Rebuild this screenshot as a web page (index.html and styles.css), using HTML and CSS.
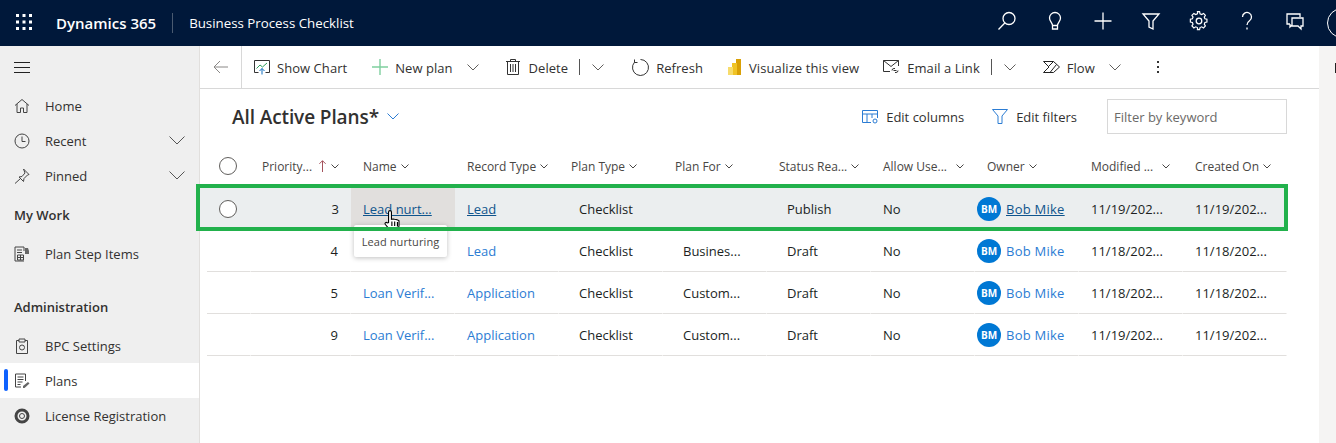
FILE: index.html
```html
<!DOCTYPE html>
<html lang="en">
<head>
    <meta charset="UTF-8">
    <title>Business Process Checklist</title>
    <link rel="stylesheet" href="styles.css">
</head>
<body>
    <header class="topbar">
        <svg class="waffle" width="16" height="16" viewBox="0 0 16 16" fill="#fff">
            <rect x="0" y="0" width="3" height="3"/><rect x="6.500" y="0" width="3" height="3"/><rect x="13" y="0" width="3" height="3"/>
            <rect x="0" y="6.500" width="3" height="3"/><rect x="6.500" y="6.500" width="3" height="3"/><rect x="13" y="6.500" width="3" height="3"/>
            <rect x="0" y="13" width="3" height="3"/><rect x="6.500" y="13" width="3" height="3"/><rect x="13" y="13" width="3" height="3"/>
        </svg>
        <span class="brand">Dynamics 365</span>
        <span class="app-name">Business Process Checklist</span>
        <div class="top-icons">
            <svg width="20" height="20" viewBox="0 0 20 20"><circle cx="12" cy="7.500" r="6"/><path d="M7.800 12 1.500 18.500"/></svg>
            <svg width="20" height="20" viewBox="0 0 20 20"><path d="M7.500 14.500C7.500 11.500 4.500 10.500 4.500 7a5.500 5.500 0 0 1 11 0c0 3.500-3 4.500-3 7.500zM7.500 14.500v3.500h5v-3.500"/></svg>
            <svg width="20" height="20" viewBox="0 0 20 20"><path d="M10 1.500v17M1.500 10h17"/></svg>
            <svg width="20" height="20" viewBox="0 0 20 20"><path d="M2 3h16l-6 7v8l-4-2v-6z"/></svg>
            <svg width="20" height="20" viewBox="0 0 20 20"><circle cx="10" cy="10" r="2.800"/><path d="M8.500 2h3l.5 2.300 1.800.8 2-1.200 2 2.100-1.200 2 .7 1.800 2.200.5v3l-2.200.5-.7 1.800 1.200 2-2 2.100-2-1.200-1.800.8-.5 2.200h-3" transform="translate(0 -1.200) scale(.92)"/><path d="M8.500 2 8 4.300l-1.800.8-2-1.200-2.100 2.100 1.200 2-.7 1.800L.4 10.300v3l2.200.5.700 1.800-1.200 2 2.100 2.100 2-1.200 1.800.8.500 2.200" transform="translate(1 -1.200) scale(.92)"/></svg>
            <svg width="20" height="20" viewBox="0 0 20 20"><path d="M5.500 6a4.500 4.500 0 1 1 7 3.700c-1.500 1-2.500 2-2.500 4.300M10 16.500v2"/></svg>
            <svg width="20" height="20" viewBox="0 0 20 20"><path d="M5 13H2V3h13v3M7 7h11v8h-2v3l-3-3H7zM5 13v3l2-2"/></svg>
        </div>
        <div class="profile"><span>B</span></div>
    </header>

    <div class="main">
        <nav class="sidebar">
            <svg class="hamburger" width="16" height="11" viewBox="0 0 16 11" stroke="#222" stroke-width="1"><path d="M0 .5h16M0 5.500h16M0 10.500h16"/></svg>
            <a class="nav-item">
                <svg class="nav-icon" viewBox="0 0 16 16"><path d="M1 7.500 8 1.500l7 6M3 6v8.500h3.500V10h3v4.500H13V6"/></svg>
                <span>Home</span>
            </a>
            <a class="nav-item">
                <svg class="nav-icon" viewBox="0 0 16 16"><circle cx="8" cy="8" r="7"/><path d="M8 3.500V8.500h3.500"/></svg>
                <span>Recent</span>
                <svg class="nav-chevron" viewBox="0 0 16 9"><path d="M.5.500 8 8 15.500.500"/></svg>
            </a>
            <a class="nav-item">
                <svg class="nav-icon" viewBox="0 0 16 16"><path d="M9.500 1 15 6.500l-1.500.5-3.500 3.500-.5 3L5 9l3-.5L11 5zM6.500 10.500 1 15.500"/></svg>
                <span>Pinned</span>
                <svg class="nav-chevron" viewBox="0 0 16 9"><path d="M.5.500 8 8 15.500.500"/></svg>
            </a>
            <div class="nav-title">My Work</div>
            <a class="nav-item">
                <svg class="nav-icon" viewBox="0 0 16 16"><path d="M10 15H1V1h9v4M3 4h5M3 6.500h5M3.500 9h6v5h-6zM3.500 11.500h6M6.500 9v5"/><path class="solid" d="M11 2h3l1 3v3h-4z"/></svg>
                <span>Plan Step Items</span>
            </a>
            <div class="nav-title admin">Administration</div>
            <a class="nav-item">
                <svg class="nav-icon" viewBox="0 0 16 16"><path d="M5 2.500H2.500v13h11v-13H11M5 1h6v3H5z"/><circle cx="8" cy="9.500" r="2.500"/></svg>
                <span>BPC Settings</span>
            </a>
            <a class="nav-item selected">
                <svg class="nav-icon" viewBox="0 0 16 16"><path d="M11.500 8V1h-10v13H7M3.500 4h6M3.500 6.500h6M3.500 9h5M3.500 11.500h3"/><path class="solid" d="M9 13l5-4 1.500 1.500-5 4.500H9z"/></svg>
                <span>Plans</span>
            </a>
            <a class="nav-item">
                <svg class="nav-icon" viewBox="0 0 16 16"><circle class="thick" cx="8" cy="8" r="6"/><circle cx="8" cy="8" r="2.500"/></svg>
                <span>License Registration</span>
            </a>
        </nav>

        <div class="content">
            <div class="commandbar">
                <div class="back">
                    <svg width="16" height="14" viewBox="0 0 16 14" fill="none" stroke="#8a8886"><path d="M15 7H1M7 1 1 7l6 6"/></svg>
                </div>
                <div class="cmd show-chart">
                    <svg width="16" height="16" viewBox="0 0 16 16" fill="none" stroke="#333"><path d="M4.500 13.500H.5v-12h15v12h-4"/><path stroke="#2e9e5b" d="M2.500 9.500 6 6l2.500 2L13 4"/><path stroke="#0f6cbd" d="M8 15.500V9.500M5.500 12 8 9.500l2.500 2.500"/></svg>
                    <span>Show Chart</span>
                </div>
                <div class="cmd new-plan">
                    <svg width="16" height="16" viewBox="0 0 16 16" fill="none" stroke="#7fcf9f" stroke-width="1.400"><path d="M8 0v16M0 8h16"/></svg>
                    <span>New plan</span>
                    <svg class="chev" viewBox="0 0 12 7"><path d="M.5.500 6 6 11.500.500"/></svg>
                </div>
                <div class="cmd delete">
                    <svg width="14" height="16" viewBox="0 0 14 16" fill="none" stroke="#333"><path d="M0 2.500h14M4.500 2.500V.5h5v2M1.500 2.500v13h11v-13M4.500 5v8M7 5v8M9.500 5v8"/></svg>
                    <span>Delete</span>
                    <i class="cmd-sep"></i>
                    <svg class="chev" viewBox="0 0 12 7"><path d="M.5.500 6 6 11.500.500"/></svg>
                </div>
                <div class="cmd refresh">
                    <svg width="17" height="17" viewBox="0 0 17 17" fill="none" stroke="#333"><path d="M8.500.5a8 8 0 1 1-6 2.700M2.500.5v3h3"/></svg>
                    <span>Refresh</span>
                </div>
                <div class="cmd visualize">
                    <svg width="13" height="16" viewBox="0 0 13 16"><rect x="8" y="0" width="5" height="16" fill="#d9a006"/><rect x="4" y="4" width="5" height="12" fill="#f0c325"/><rect x="0" y="8" width="5" height="8" fill="#f7dc6c"/></svg>
                    <span>Visualize this view</span>
                </div>
                <div class="cmd email">
                    <svg width="17" height="14" viewBox="0 0 17 14" fill="none" stroke="#333"><path d="M7 11.500H.5V.5h15V6M.5.500 8 6.500 15.500.500"/><path d="M9 10.500a2 2 0 0 1 2-2h1M15 10.500a2 2 0 0 1-2 2h-1M10.500 10.500h3"/></svg>
                    <span>Email a Link</span>
                    <i class="cmd-sep"></i>
                    <svg class="chev" viewBox="0 0 12 7"><path d="M.5.500 6 6 11.500.500"/></svg>
                </div>
                <div class="cmd flow">
                    <svg width="17" height="12" viewBox="0 0 17 12" fill="none" stroke="#222"><path d="M.5.500h10l6 5.500-6 5.500H.5L6 6zM10.500.5 5 6M13.500 3.500 7 11.500"/></svg>
                    <span>Flow</span>
                    <svg class="chev" viewBox="0 0 12 7"><path d="M.5.500 6 6 11.500.500"/></svg>
                </div>
                <div class="more"><i></i><i></i><i></i></div>
            </div>

            <div class="viewbar">
                <h1>All Active Plans*</h1>
                <svg class="view-chev" viewBox="0 0 12 7"><path d="M.5.500 6 6 11.500.500"/></svg>
                <div class="view-action edit-columns">
                    <svg width="16" height="14" viewBox="0 0 16 14" fill="none" stroke="#2b7cd3"><path d="M9 12.500H.5V.5h15V8M.5 4h15M5 4v8.500M10 4v4"/><circle cx="13" cy="11" r="2"/></svg>
                    <span>Edit columns</span>
                </div>
                <div class="view-action edit-filters">
                    <svg width="16" height="15" viewBox="0 0 16 15" fill="none" stroke="#2b7cd3"><path d="M.5.500h15L10 7v7.500H6V7z"/></svg>
                    <span>Edit filters</span>
                </div>
                <div class="keyword">Filter by keyword</div>
            </div>

            <div class="grid">
                <div class="row head">
                    <div class="cell check"><i class="circle"></i></div>
                    <div class="cell priority">Priority...<svg class="sort" width="7" height="12" viewBox="0 0 7 12"><path d="M3.500 12V.8M.4 3.800 3.500.7l3.100 3.100"/></svg><svg class="chev-sm" viewBox="0 0 8 5"><path d="M.5.500 4 4 7.500.500"/></svg></div>
                    <div class="cell">Name<svg class="chev-sm" viewBox="0 0 8 5"><path d="M.5.500 4 4 7.500.500"/></svg></div>
                    <div class="cell">Record Type<svg class="chev-sm" viewBox="0 0 8 5"><path d="M.5.500 4 4 7.500.500"/></svg></div>
                    <div class="cell">Plan Type<svg class="chev-sm" viewBox="0 0 8 5"><path d="M.5.500 4 4 7.500.500"/></svg></div>
                    <div class="cell">Plan For<svg class="chev-sm" viewBox="0 0 8 5"><path d="M.5.500 4 4 7.500.500"/></svg></div>
                    <div class="cell">Status Rea...<svg class="chev-sm" viewBox="0 0 8 5"><path d="M.5.500 4 4 7.500.500"/></svg></div>
                    <div class="cell wide">Allow Use...<svg class="chev-sm" viewBox="0 0 8 5"><path d="M.5.500 4 4 7.500.500"/></svg></div>
                    <div class="cell">Owner<svg class="chev-sm" viewBox="0 0 8 5"><path d="M.5.500 4 4 7.500.500"/></svg></div>
                    <div class="cell wide">Modified ...<svg class="chev-sm" viewBox="0 0 8 5"><path d="M.5.500 4 4 7.500.500"/></svg></div>
                    <div class="cell">Created On<svg class="chev-sm" viewBox="0 0 8 5"><path d="M.5.500 4 4 7.500.500"/></svg></div>
                </div>

                <div class="row data hover">
                    <div class="cell check"><i class="circle"></i></div>
                    <div class="cell num">3</div>
                    <div class="cell active"><a>Lead nurt...</a></div>
                    <div class="cell"><a>Lead</a></div>
                    <div class="cell">Checklist</div>
                    <div class="cell"></div>
                    <div class="cell">Publish</div>
                    <div class="cell">No</div>
                    <div class="cell owner"><b class="avatar">BM</b><a>Bob Mike</a></div>
                    <div class="cell">11/19/202...</div>
                    <div class="cell">11/19/202...</div>
                </div>
                <div class="row data">
                    <div class="cell check"></div>
                    <div class="cell num">4</div>
                    <div class="cell"></div>
                    <div class="cell"><a>Lead</a></div>
                    <div class="cell">Checklist</div>
                    <div class="cell">Busines...</div>
                    <div class="cell">Draft</div>
                    <div class="cell">No</div>
                    <div class="cell owner"><b class="avatar">BM</b><a>Bob Mike</a></div>
                    <div class="cell">11/18/202...</div>
                    <div class="cell">11/18/202...</div>
                </div>
                <div class="row data">
                    <div class="cell check"></div>
                    <div class="cell num">5</div>
                    <div class="cell"><a>Loan Verif...</a></div>
                    <div class="cell"><a>Application</a></div>
                    <div class="cell">Checklist</div>
                    <div class="cell">Custom...</div>
                    <div class="cell">Draft</div>
                    <div class="cell">No</div>
                    <div class="cell owner"><b class="avatar">BM</b><a>Bob Mike</a></div>
                    <div class="cell">11/18/202...</div>
                    <div class="cell">11/18/202...</div>
                </div>
                <div class="row data">
                    <div class="cell check"></div>
                    <div class="cell num">9</div>
                    <div class="cell"><a>Loan Verif...</a></div>
                    <div class="cell"><a>Application</a></div>
                    <div class="cell">Checklist</div>
                    <div class="cell">Custom...</div>
                    <div class="cell">Draft</div>
                    <div class="cell">No</div>
                    <div class="cell owner"><b class="avatar">BM</b><a>Bob Mike</a></div>
                    <div class="cell">11/19/202...</div>
                    <div class="cell">11/19/202...</div>
                </div>
            </div>
        </div>

        <div class="gutter"><i></i></div>
    </div>

    <!-- hover things and the annotation box on top of the grid -->
    <div class="tooltip">Lead nurturing</div>
    <svg class="cursor" width="20" height="25" viewBox="0 0 18 22">
        <path fill="#fff" stroke="#000" d="M5 12V2.500a1.300 1.300 0 0 1 2.600 0V9l1.400-.3 1.400.3 1.400.2 1.400.5 1.200.6V15l-1.200 4H6.500L2 13.500c-.7-1.200.8-2.300 1.800-1.300z"/>
        <path stroke="#000" fill="none" d="M8 11v4M10.500 11v4M13 11.500v4"/>
    </svg>
    <div class="highlight"></div>
</body>
</html>
```

FILE: styles.css
```css
* {
    box-sizing: border-box;
}

body {
    margin: 0;
    height: 443px;
    overflow: hidden;
    font-family: "Open Sans", "Noto Sans", sans-serif;
    font-size: 13px;
    color: #323130;
    background-color: #fff;
}

/* top bar */
.topbar {
    height: 46px;
    background-color: #00183a;
    color: #fff;
    display: flex;
    align-items: center;
    overflow: hidden;
}

.waffle {
    margin: -2px 0 0 16px;
}

.brand {
    margin-left: 24px;
    font-size: 15px;
    font-weight: 600;
    padding-right: 16px;
    border-right: 1px solid #4a5a70;
    line-height: 20px;
}

.app-name {
    margin-left: 16px;
    font-size: 13.300px;
}

.top-icons {
    margin: -4px 0 0 auto;
    display: flex;
    gap: 28px;
}

.top-icons svg {
    fill: none;
    stroke: #fff;
    stroke-width: 1.300;
}

.profile {
    margin: 0 -21px 0 22px;
    width: 30px;
    height: 30px;
    border: 1px solid #fff;
    border-radius: 50%;
    display: flex;
    align-items: center;
    justify-content: center;
    font-size: 12px;
}

.main {
    display: flex;
    height: 397px;
}

/* left nav */
.sidebar {
    width: 200px;
    flex-shrink: 0;
    background-color: #efefef;
    border-right: 1px solid #e1dfdd;
    padding-top: 16px;
}

.hamburger {
    display: block;
    margin: 0 0 15px 14px;
}

.nav-item {
    height: 35px;
    display: flex;
    align-items: center;
    padding-left: 14px;
    font-size: 13px;
    position: relative;
}

.nav-item span {
    margin-left: 15px;
}

.nav-icon {
    width: 16px;
    height: 16px;
    fill: none;
    stroke: #444;
}

.nav-icon .solid {
    fill: #666;
    stroke: none;
}

.nav-icon .thick {
    stroke-width: 3;
}

.nav-chevron {
    width: 16px;
    height: 9px;
    margin-left: auto;
    margin-right: 14px;
    fill: none;
    stroke: #555;
}

.nav-title {
    font-size: 13px;
    font-weight: 600;
    padding-left: 14px;
    line-height: 18px;
    margin: 13px 0 12px;
}

.nav-title.admin {
    margin: 27px 0 12px;
}

.nav-item.selected {
    background-color: #fff;
}

.nav-item.selected::before {
    content: "";
    position: absolute;
    left: 4px;
    top: 6px;
    width: 4px;
    height: 22px;
    border-radius: 2px;
    background-color: #0f62fe;
}

/* command bar */
.content {
    flex: 1;
    min-width: 0;
}

.commandbar {
    height: 43px;
    border-bottom: 1px solid #d8d8d8;
    display: flex;
    align-items: center;
    position: relative;
}

.back {
    width: 42px;
    height: 42px;
    border-right: 1px solid #d8d8d8;
    display: flex;
    align-items: center;
    justify-content: center;
}

.cmd {
    display: flex;
    align-items: center;
    margin-left: 12px;
    white-space: nowrap;
}

.cmd span {
    margin: 2px 0 0 7px;
    letter-spacing: 0.05px;
}

.new-plan {
    margin-left: 25px;
}

.delete {
    margin-left: 27px;
}

.delete span {
    margin-left: 9px;
}

.refresh {
    margin-left: 28px;
}

.visualize {
    margin-left: 25px;
}

.visualize span {
    margin-left: 8px;
    letter-spacing: 0.1px;
}

.email {
    margin-left: 24px;
}

.flow {
    margin-left: 27px;
}

.chev {
    width: 12px;
    height: 7px;
    fill: none;
    stroke: #605e5c;
    margin-left: 14px;
}

.cmd-sep {
    width: 1px;
    height: 16px;
    margin-left: 11px;
    background-color: #555;
}

.cmd-sep + .chev {
    margin-left: 12px;
}

.more {
    margin-left: 36px;
    display: flex;
    flex-direction: column;
    gap: 3px;
}

.more i {
    width: 2px;
    height: 2px;
    background-color: #333;
}

/* view header */
.viewbar {
    height: 55px;
    display: flex;
    align-items: center;
    padding-left: 32px;
}

h1 {
    margin: 0;
    font-size: 19px;
    font-weight: 600;
    letter-spacing: -0.1px;
    color: #323130;
}

.view-chev {
    width: 12px;
    height: 7px;
    margin-left: 8px;
    fill: none;
    stroke: #2b7cd3;
}

.view-action {
    display: flex;
    align-items: center;
    gap: 8px;
}

.edit-columns {
    margin-left: auto;
}

.edit-filters {
    margin-left: 28px;
}

.keyword {
    width: 180px;
    height: 35px;
    margin: 0 32px 0 30px;
    border: 1px solid #d8d8d8;
    padding-left: 6px;
    line-height: 34px;
    color: #6b6a68;
}

/* plan grid */
.grid {
    margin-left: 7px;
    width: 1080px;
}

.row {
    display: grid;
    grid-template-columns: 44px 100px repeat(9, 104px);
    align-items: stretch;
}

.row.head {
    height: 44px;
    font-size: 12px;
    color: #484644;
}

.row.data {
    height: 42px;
    color: #201f1e;
}

.cell {
    display: flex;
    align-items: center;
    padding-left: 12px;
    white-space: nowrap;
    min-width: 0;
}

.data .cell {
    border-bottom: 1px solid #e1dfdd;
    border-right: 1px solid #fff;
}

/* these three columns sit a bit further in than their headers */
.data .cell:nth-child(5),
.data .cell:nth-child(6),
.data .cell:nth-child(7) {
    padding-left: 20px;
}

.head .priority {
    padding-left: 11px;
}

.data .num {
    justify-content: flex-end;
    padding-right: 12px;
}

.row.hover {
    background-color: #ebeeef;
    box-shadow: -7px 0 0 #ebeeef;
}

.hover .cell {
    border-right: none;
    border-bottom: none;
}

.cell.active {
    background-color: #e1dfdd;
}

.cell a {
    color: #2b7cd3;
}

.hover .cell a {
    color: #0f548c;
    text-decoration: underline;
}

.circle {
    width: 18px;
    height: 18px;
    border: 1px solid #605e5c;
    border-radius: 50%;
    background-color: #fff;
}

.sort {
    flex-shrink: 0;
    margin-left: 7px;
    fill: none;
    stroke: #a4525c;
}

.chev-sm {
    width: 8px;
    height: 5px;
    flex-shrink: 0;
    margin-left: 4px;
    fill: none;
    stroke: #484644;
}

.sort + .chev-sm {
    margin-left: 5px;
}

.head .wide .chev-sm {
    margin-left: 9px;
}

.data .owner {
    padding-left: 2px;
    gap: 5px;
}

.owner a {
    letter-spacing: 0.25px;
}

.avatar {
    width: 24px;
    height: 24px;
    border-radius: 50%;
    background-color: #0078d4;
    color: #fff;
    font-size: 10px;
    font-weight: 700;
    display: flex;
    align-items: center;
    justify-content: center;
}

.gutter {
    width: 17px;
    background-color: #f5f4f3;
    display: flex;
    justify-content: flex-end;
    align-items: flex-start;
}

.gutter i {
    width: 1px;
    height: 10px;
    margin-top: 17px;
    background-color: #222;
}

/* overlays */
.tooltip {
    position: absolute;
    left: 354px;
    top: 225px;
    width: 93px;
    height: 32px;
    background-color: #fff;
    border-radius: 2px;
    box-shadow: 0 1px 5px rgba(0, 0, 0, 0.25);
    font-size: 11px;
    letter-spacing: 0.1px;
    color: #484644;
    display: flex;
    align-items: center;
    justify-content: center;
}

.cursor {
    position: absolute;
    left: 383px;
    top: 209px;
}

.highlight {
    position: absolute;
    left: 196px;
    top: 184px;
    width: 1092px;
    height: 47px;
    border: 4px solid #22b14c;
}
```
